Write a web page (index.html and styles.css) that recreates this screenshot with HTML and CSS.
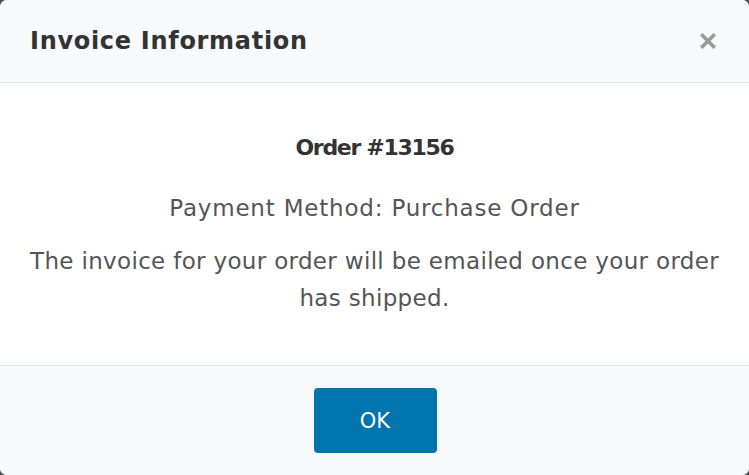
FILE: index.html
```html
<!DOCTYPE html>
<html lang="en">
<head>
<meta charset="utf-8">
<title>Invoice Information</title>
<link rel="stylesheet" href="styles.css">
</head>
<body>
<div class="modal">
  <div class="modal-header">
    <h1 class="modal-title">Invoice Information</h1>
    <button class="close" aria-label="Close">
      <svg width="16" height="16" viewBox="0 0 16 16"><path d="M2.5 2.5 L13.5 13.5 M13.5 2.5 L2.5 13.5" stroke="#9a9a9a" stroke-width="3.6" stroke-linecap="square"/></svg>
    </button>
  </div>
  <div class="modal-body">
    <p class="order">Order #13156</p>
    <p class="method">Payment Method: Purchase Order</p>
    <p class="note">The invoice for your order will be emailed once your order has shipped.</p>
  </div>
  <div class="modal-footer">
    <button class="btn-ok">OK</button>
  </div>
</div>
</body>
</html>
```
FILE: styles.css
```css
html, body {
  margin: 0;
  padding: 0;
  height: 100%;
}
body {
  background: #4d4d4d;
  font-family: "DejaVu Sans", "Noto Sans", sans-serif;
}
.modal {
  width: 749px;
  height: 475px;
  background: #ffffff;
  border-radius: 7px;
  overflow: hidden;
  display: flex;
  flex-direction: column;
}
.modal-header {
  height: 83px;
  box-sizing: border-box;
  background: #f8f9fa;
  border-bottom: 1px solid #dee2e6;
  display: flex;
  align-items: center;
  justify-content: space-between;
  padding: 0 33px 0 30px;
  flex: none;
}
.modal-title {
  margin: 0;
  font-size: 24px;
  letter-spacing: 0.7px;
  font-weight: bold;
  color: #333333;
  padding-bottom: 1px;
}
.close {
  background: none;
  border: 0;
  padding: 0;
  width: 16px;
  height: 16px;
  display: flex;
}
.modal-body {
  flex: 1;
  text-align: center;
  padding: 47px 16px 0;
  color: #555555;
}
.modal-body p {
  margin: 0;
}
.order {
  font-size: 22px;
  letter-spacing: -1.3px;
  font-weight: bold;
  color: #333333;
  line-height: 36px;
}
.method {
  margin-top: 24px !important;
  font-size: 23px;
  letter-spacing: 0.8px;
  line-height: 36px;
}
.note {
  margin-top: 17px !important;
  font-size: 23px;
  letter-spacing: 0.33px;
  line-height: 37px;
}
.modal-footer {
  height: 110px;
  box-sizing: border-box;
  flex: none;
  background: #f8f9fa;
  border-top: 1px solid #dee2e6;
  display: flex;
  align-items: center;
  justify-content: center;
}
.btn-ok {
  width: 123px;
  height: 65px;
  background: #0074ad;
  color: #ffffff;
  border: 0;
  border-radius: 4px;
  font-family: inherit;
  font-size: 21px;
  margin-left: 1px;
}
```
